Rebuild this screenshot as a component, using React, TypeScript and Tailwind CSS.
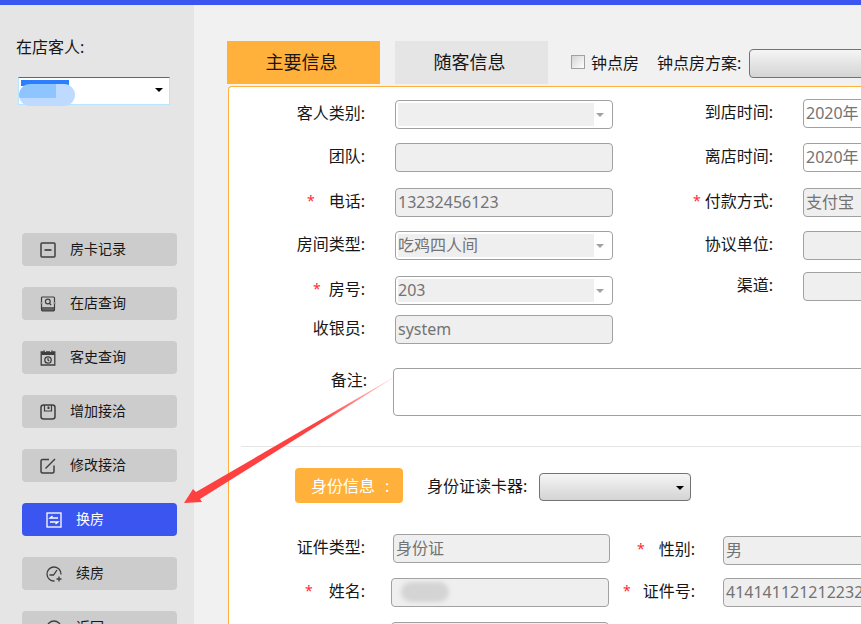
import React from "react";

const ink = "#3f3f3f";

function IconMinus() {
  return (
    <svg viewBox="0 0 16 16" className="size-4 shrink-0" fill="none" stroke={ink} strokeWidth="1.5">
      <rect x="1" y="1" width="14" height="14" rx="1" />
      <path d="M4.5 8h7" strokeWidth="1.7" />
    </svg>
  );
}

function IconSearchBox() {
  return (
    <svg viewBox="0 0 16 16" className="size-4 shrink-0" fill="none" stroke={ink} strokeWidth="1.2">
      <path d="M1.5 6V2q0-1 1-1h11q1 0 1 1v4M1.5 8v5q0 2 2 2h9q2 0 2-2V8" />
      <path d="M1 11h14v2.5q0 1.5-1.5 1.5h-11Q1 15 1 13.5z" fill={ink} opacity="0.75" stroke="none" />
      <circle cx="7.8" cy="5.5" r="2.4" />
      <path d="M9.6 7.5l1.6 1.6M.5 7h2M13.5 7h2" />
    </svg>
  );
}

function IconCalendar() {
  return (
    <svg viewBox="0 0 16 16" className="size-4 shrink-0" fill="none" stroke={ink} strokeWidth="1.3">
      <path d="M3 2H1.2v13h13.6V2H13M6 2h4" />
      <path d="M1.2 2h13.6v3H1.2z" fill={ink} stroke="none" />
      <path d="M4 .5v3M12 .5v3" strokeWidth="1.6" />
      <circle cx="8" cy="10" r="3.2" />
      <path d="M8 8.2V10l1.2 1" />
    </svg>
  );
}

function IconSave() {
  return (
    <svg viewBox="0 0 16 16" className="size-4 shrink-0" fill="none" stroke={ink} strokeWidth="1.5">
      <rect x="1" y="1" width="14" height="14" rx="2.5" />
      <path d="M4.5 1v6h7V1" strokeWidth="1.2" />
      <path d="M7.5 2.5h2v2.5h-2z" fill={ink} stroke="none" />
    </svg>
  );
}

function IconEdit() {
  return (
    <svg viewBox="0 0 16 16" className="size-4 shrink-0" fill="none" stroke={ink} strokeWidth="1.5">
      <path d="M9 1.5H2.5q-1.5 0-1.5 1.5v10q0 2 1.5 2h10q1.5 0 1.5-1.5V7.5" />
      <path d="M5.5 10.5L15 1" />
    </svg>
  );
}

function IconSwap() {
  return (
    <svg viewBox="0 0 16 16" className="size-4 shrink-0" fill="none" stroke="#fff" strokeWidth="1.3">
      <rect x="1" y="1" width="14" height="14" />
      <path d="M12 6H4l2.5-2M4 10h8l-2.5 2" />
    </svg>
  );
}

function IconClockPlus() {
  return (
    <svg viewBox="0 0 16 16" className="size-4 shrink-0" fill="none" stroke={ink} strokeWidth="1.3">
      <path d="M8.5 15A7 7 0 1 1 15 8.5" />
      <path d="M11 4L7.5 9H3.5" />
      <path d="M13 10.5v5M10.5 13h5" />
    </svg>
  );
}

function IconSmile() {
  return (
    <svg viewBox="0 0 16 16" className="size-4 shrink-0" fill="none" stroke={ink} strokeWidth="1.3">
      <circle cx="8" cy="8" r="7" />
      <path d="M5 6h.5M10.5 6h.5" />
    </svg>
  );
}

const sideButtons = [
  { label: "房卡记录", icon: <IconMinus /> },
  { label: "在店查询", icon: <IconSearchBox /> },
  { label: "客史查询", icon: <IconCalendar /> },
  { label: "增加接洽", icon: <IconSave /> },
  { label: "修改接洽", icon: <IconEdit /> },
  { label: "换房", icon: <IconSwap />, active: true },
  { label: "续房", icon: <IconClockPlus /> },
  { label: "返回", icon: <IconSmile /> },
];

function Sidebar() {
  return (
    <aside className="w-[194px] shrink-0 bg-neutral-200 pt-7.5">
      <div className="pl-4 text-base leading-6 text-neutral-900">在店客人:</div>
      <div className="relative mt-4.5 ml-4.5 h-7 w-38 border border-sky-200 border-t-sky-600 bg-white">
        {/* blurred name */}
        <div className="absolute top-0.5 left-0.5 h-1.5 w-12 bg-blue-500" />
        <div className="absolute top-1.5 left-0 flex h-5.5 w-14 flex-col overflow-hidden rounded-xl">
          <div className="flex flex-1">
            <div className="flex-1 bg-blue-300" />
            <div className="flex-1 bg-blue-300" />
            <div className="flex-1 bg-blue-200" />
          </div>
          <div className="h-2 bg-blue-200" />
        </div>
        <Caret className="absolute top-2.5 right-1.5" />
      </div>

      <div className="mt-32 ml-5.5 flex flex-col gap-5.25">
        {sideButtons.map((b) => (
          <div
            key={b.label}
            className={`flex h-8.25 w-38.75 shrink-0 items-center gap-3.5 rounded-sm text-sm ${
              b.label.length === 2 ? "pl-6" : "pl-4.5"
            } ${b.active ? "bg-[#3b55f0] text-white" : "bg-[#cccccc] text-neutral-900"}`}
          >
            {b.icon}
            <span className="mb-0.5">{b.label}</span>
          </div>
        ))}
      </div>
    </aside>
  );
}

function Caret({ className = "", color = "border-t-black" }: { className?: string; color?: string }) {
  return (
    <span
      className={`size-0 border-x-4 border-t-4 border-x-transparent ${color} ${className}`}
    />
  );
}

function NativeSelect({ className = "", caret = true }: { className?: string; caret?: boolean }) {
  return (
    <div
      className={`relative shrink-0 rounded-sm border border-neutral-500 bg-linear-to-b from-neutral-100 to-neutral-300 ${className}`}
    >
      {caret && <Caret className="absolute top-3 right-1.5" />}
    </div>
  );
}

function Star({ className = "" }: { className?: string }) {
  return <span className={`text-sm text-red-500 ${className}`}>*</span>;
}

function Label({ text, star, width }: { text: string; star?: string; width: string }) {
  return (
    <div className={`mb-1 flex shrink-0 items-center justify-end leading-6 text-neutral-900 ${width}`}>
      {star && <Star className={star} />}
      <span>{text}</span>
    </div>
  );
}

function Input({ value, className = "" }: { value?: string; className?: string }) {
  return (
    <div
      className={`flex h-7.25 shrink-0 items-center rounded-sm border border-neutral-400 bg-[#efefef] px-0.5 pb-0.5 text-base whitespace-nowrap text-neutral-500 ${className}`}
    >
      {value}
    </div>
  );
}

function SelectField({ value }: { value?: string }) {
  return (
    <div className="relative flex h-7.25 w-54.5 shrink-0 items-center rounded-sm border border-neutral-400 bg-white p-0.5 text-base text-neutral-500">
      <div className="flex h-full w-49 items-center bg-[#efefef] pb-0.5">{value}</div>
      <Caret className="absolute top-3 right-2" color="border-t-neutral-400" />
    </div>
  );
}

const leftRows = [
  { label: "客人类别:", mt: "mt-px", select: true },
  { label: "团队:", mt: "mt-3.5" },
  { label: "电话:", mt: "mt-4", star: "mr-3.5", value: "13232456123" },
  { label: "房间类型:", mt: "mt-3.5", select: true, value: "吃鸡四人间" },
  { label: "房号:", mt: "mt-4", star: "mr-2", select: true, value: "203" },
  { label: "收银员:", mt: "mt-2.5", value: "system" },
];

const rightRows = [
  { label: "到店时间:", mt: "mt-0", value: "2020年", light: true },
  { label: "离店时间:", mt: "mt-3.75", value: "2020年", light: true },
  { label: "付款方式:", mt: "mt-4", star: "mr-1", value: "支付宝" },
  { label: "协议单位:", mt: "mt-3.5" },
  { label: "渠道:", mt: "mt-3" },
];

function MainInfo() {
  return (
    <div className="flex pt-3">
      <div className="flex flex-col">
        {leftRows.map((r) => (
          <div key={r.label} className={`flex items-center ${r.mt}`}>
            <Label text={r.label} star={r.star} width="w-34" />
            <div className="ml-7.5">
              {r.select ? <SelectField value={r.value} /> : <Input value={r.value} className="w-54.5" />}
            </div>
          </div>
        ))}
      </div>
      <div className="flex flex-col">
        {rightRows.map((r) => (
          <div key={r.label} className={`flex items-center ${r.mt}`}>
            <Label text={r.label} star={r.star} width="w-40" />
            <Input
              value={r.value}
              className={`ml-7.5 w-40 ${r.light ? "border-neutral-300 bg-white" : ""}`}
            />
          </div>
        ))}
      </div>
    </div>
  );
}

function IdentityInfo() {
  return (
    <div>
      <div className="mt-5.25 ml-16.5 flex items-center">
        <div className="flex h-8.75 w-27 shrink-0 items-center rounded-sm bg-[#ffb13b] pl-4 text-base text-white">
          身份信息<span className="ml-2.5">:</span>
        </div>
        <span className="ml-6 text-neutral-900">身份证读卡器:</span>
        <NativeSelect className="mt-0.5 ml-3 h-7 w-38" />
      </div>

      <div className="mt-7.75 flex items-start">
        <div className="flex w-95 shrink-0 items-center">
          <Label text="证件类型:" width="w-34" />
          <Input value="身份证" className="ml-7 w-54.25" />
        </div>
        <div className="mt-0.5 flex items-center">
          <Label text="性别:" star="mr-3.5" width="w-21.5" />
          <Input value="男" className="ml-7 w-40" />
        </div>
      </div>

      <div className="mt-3.25 flex items-center">
        <div className="flex w-95 shrink-0 items-center">
          <Label text="姓名:" star="mr-4" width="w-34" />
          <div className="relative ml-6.5">
            <Input className="w-54.5" />
            {/* blurred name */}
            <div className="absolute top-1 left-2.5 h-5 w-12 rounded-full bg-neutral-300 blur-[2px]" />
          </div>
        </div>
        <Label text="证件号:" star="mr-3" width="w-21.5" />
        <Input value="414141121212232" className="ml-7 w-40" />
      </div>

      <div className="mt-3.75 ml-40.5">
        <Input className="w-54.5" />
      </div>
    </div>
  );
}

export default function App() {
  return (
    <div className="relative flex h-screen w-screen flex-col overflow-hidden font-['Noto_Sans','Noto_Sans_CJK_SC',sans-serif] text-base">
      <div className="h-1.25 shrink-0 bg-[#3b55f0]" />
      <div className="flex min-h-0 flex-1">
        <Sidebar />
        <main className="min-w-0 flex-1 bg-[#f1f1f1] pt-9 pl-8">
          <div className="ml-px flex h-10.75 items-center">
            <div className="flex h-full w-38.25 shrink-0 items-center justify-center bg-[#ffb13b] pr-1 pb-0.5 text-lg text-neutral-900">
              主要信息
            </div>
            <div className="ml-3.75 flex h-full w-38.25 shrink-0 items-center justify-center bg-neutral-200 pr-1 pb-0.5 text-lg text-neutral-900">
              随客信息
            </div>
            <div className="mb-0.5 ml-5.75 size-3.5 shrink-0 border border-neutral-400 bg-linear-to-br from-neutral-300 to-white" />
            <span className="ml-1.5 shrink-0 text-neutral-900">钟点房</span>
            <span className="ml-4.5 shrink-0 text-neutral-900">钟点房方案:</span>
            <NativeSelect className="mt-0.5 ml-2 h-7.25 w-40" caret={false} />
          </div>

          <div className="mt-0.5 ml-0.5 h-full w-240 rounded-tl-sm border-t border-l border-[#ffb13b] bg-white">
            <MainInfo />
            <div className="mt-6 flex items-start">
              <Label text="备注:" width="w-34.5" />
              <div className="ml-6.5 h-12 w-150 shrink-0 rounded-sm border border-neutral-400 bg-white" />
            </div>
            <div className="mt-7.5 ml-3 border-t border-neutral-200" />
            <IdentityInfo />
          </div>
        </main>
      </div>

      {/* annotation arrow drawn over the screenshot */}
      <svg className="pointer-events-none absolute inset-0 size-full" viewBox="0 0 861 624">
        <defs>
          <linearGradient id="arrowFade" gradientUnits="userSpaceOnUse" x1="401" y1="373" x2="320" y2="420">
            <stop offset="0" stopColor="#ff4040" stopOpacity="0.1" />
            <stop offset="1" stopColor="#ff4040" />
          </linearGradient>
        </defs>
        <polygon points="184,503 193,489 196,492 401,373 200,499 202,502" fill="url(#arrowFade)" />
      </svg>
    </div>
  );
}
